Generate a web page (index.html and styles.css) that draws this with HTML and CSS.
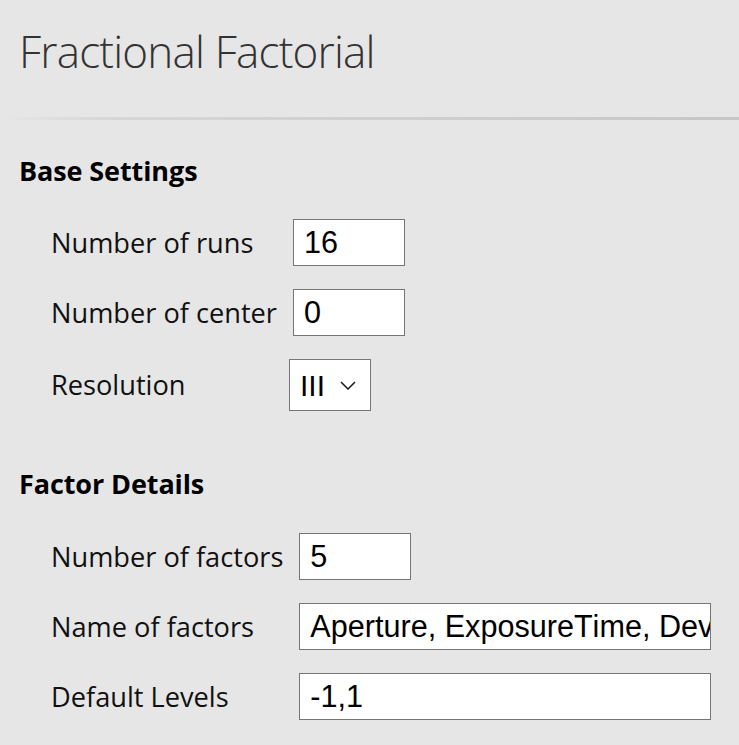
FILE: index.html
```html
<!DOCTYPE html>
<html lang="en">
<head>
<meta charset="utf-8">
<title>Fractional Factorial</title>
<link rel="stylesheet" href="styles.css">
</head>
<body>
<header class="page-header">
  <h1 class="title">Fractional Factorial</h1>
</header>
<div class="divider"></div>

<section class="section section-base">
  <h2 class="section-title">Base Settings</h2>
  <div class="form-grid">
    <label class="field-label" for="runs">Number of runs</label>
    <input class="field-input num" id="runs" type="text" value="16">
    <label class="field-label" for="center">Number of center</label>
    <input class="field-input num" id="center" type="text" value="0">
    <label class="field-label" for="resolution">Resolution</label>
    <div class="select-wrap">
      <select class="field-select" id="resolution">
        <option>III</option>
        <option>IV</option>
        <option>V</option>
      </select>
      <svg class="chevron" width="16" height="9" viewBox="0 0 16 9" aria-hidden="true">
        <polyline points="1,1 8,8 15,1" fill="none" stroke="#1a1a1a" stroke-width="1.5"/>
      </svg>
    </div>
  </div>
</section>

<section class="section section-factors">
  <h2 class="section-title">Factor Details</h2>
  <div class="form-grid">
    <label class="field-label" for="nfactors">Number of factors</label>
    <input class="field-input num" id="nfactors" type="text" value="5">
    <label class="field-label" for="names">Name of factors</label>
    <input class="field-input wide" id="names" type="text" value="Aperture, ExposureTime, DevelopTime, MaskDimension, EtchTime">
    <label class="field-label" for="levels">Default Levels</label>
    <input class="field-input wide" id="levels" type="text" value="-1,1">
  </div>
</section>
</body>
</html>
```

FILE: styles.css
```css
html, body {
  margin: 0;
  padding: 0;
  background: #e6e6e6;
}

body {
  font-family: "Open Sans", "Noto Sans", sans-serif;
  color: #111111;
  width: 739px;
  overflow: hidden;
}

.page-header {
  padding: 26px 0 0 19px;
}

.title {
  margin: 0;
  font-size: 44px;
  line-height: 50px;
  font-weight: 300;
  letter-spacing: -0.8px;
  color: #333333;
}

.divider {
  margin-top: 41px;
  height: 3px;
  background: linear-gradient(to right, #e6e6e6 0%, #d6d6d6 15%, #cfcfcf 55%, #c6c6c6 100%);
}

.section {
  padding-left: 19px;
}

.section-base {
  padding-top: 33px;
}

.section-factors {
  padding-top: 55px;
}

.section-title {
  margin: 0;
  font-size: 27px;
  line-height: 36px;
  font-weight: 700;
  color: #000000;
  letter-spacing: -0.1px;
}

.form-grid {
  margin-top: 30px;
  margin-left: 32px;
  display: grid;
  grid-template-columns: max-content max-content;
  column-gap: 12px;
  row-gap: 23px;
  align-items: center;
}

.section-factors .form-grid {
  margin-top: 31px;
}

.field-label {
  font-size: 27.2px;
  line-height: 36px;
  color: #111111;
}

.field-input {
  box-sizing: border-box;
  height: 47px;
  margin: 0 0 0 4px;
  padding: 0 0 0 10px;
  border: 1px solid #767676;
  border-radius: 0;
  background: #ffffff;
  font-family: "Liberation Sans", Arial, sans-serif;
  font-size: 30.6px;
  font-kerning: none;
  color: #000000;
  outline: none;
}

.num {
  width: 112px;
}

.wide {
  width: 412px;
}

.select-wrap {
  position: relative;
  width: 82px;
  height: 52px;
}

.field-select {
  box-sizing: border-box;
  width: 82px;
  height: 52px;
  margin: 0;
  padding: 0 0 0 10px;
  border: 1px solid #767676;
  border-radius: 0;
  background: #ffffff;
  font-family: "Liberation Sans", Arial, sans-serif;
  font-size: 30px;
  color: #000000;
  appearance: none;
  -webkit-appearance: none;
  outline: none;
}

.chevron {
  position: absolute;
  left: 51px;
  top: 22px;
  pointer-events: none;
}
```
